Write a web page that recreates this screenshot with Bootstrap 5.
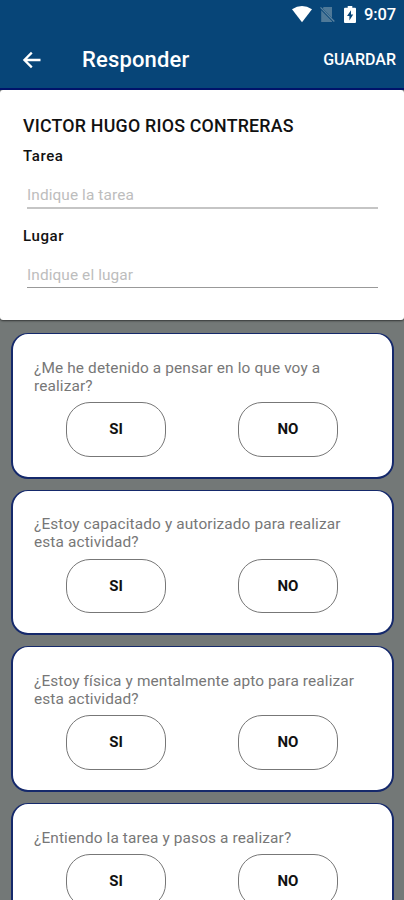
<!DOCTYPE html>
<html lang="es">
<head>
<meta charset="utf-8">
<meta name="viewport" content="width=device-width, initial-scale=1">
<title>Responder</title>
<link href="https://cdn.jsdelivr.net/npm/bootstrap@5.3.0/dist/css/bootstrap.min.css" rel="stylesheet">
<style>
html, body { height: 100%; overflow: hidden; }
body { font-family: Roboto, "Liberation Sans", sans-serif; background: #737877; color: #111; }
.screen { height: 900px; overflow: hidden; }
.top-area { background: #074578; height: 90px; border-bottom: 2px solid #00136b; }
.status-bar { height: 28px; padding-right: 8px; }
.battery { margin-left: 9px; }
.clock { font-size: 16.5px; font-weight: 500; line-height: 30px; padding-top: 2px; letter-spacing: -.1px; }
.app-bar { height: 60px; padding: 3px 8px 0 22px; }
.app-title { font-size: 22px; font-weight: 500; margin-left: 41px; line-height: 1; letter-spacing: .15px; padding-top: 1px; }
.save { font-size: 16px; font-weight: 500; line-height: 1; color: #fff; padding-top: 1px !important; }
.person { height: 230px; border-radius: 3px; padding: 26px 23px 0; box-shadow: 0 1px 2px rgba(0,0,0,.55); }
.person-name { font-size: 17.8px; font-weight: 500; line-height: 20px; letter-spacing: .22px; }
.field-label { font-size: 15px; font-weight: 500; line-height: 18px; letter-spacing: .6px; margin-top: 11px; }
.field-label + .field-input { margin: 12px 3px 0 4px; }
.field-input { width: auto; align-self: stretch; height: 32px; font-size: 15.4px; padding: 6px 0 0 0; letter-spacing: .1px; border-bottom: 2px solid #c5c5c5 !important; color: #222; }
.second-label { margin-top: 18px; }
.field-label + .field-input.thin { height: 31px; padding-top: 6px; border-bottom: 1px solid #999 !important; }
.field-input::placeholder { color: #bdbdbd; opacity: 1; }
.questions { padding-top: 13px; }
.question { margin: 0 10px 10.9px 11px; height: 145.8px; border: 2px solid #15296b; border-top-width: 1px; border-radius: 17px; padding: 24.6px 21px 0; }
.question-text { font-size: 15.4px; line-height: 18.2px; color: #777; letter-spacing: .13px; }
.answers { padding: 0 33px 0 32px; margin-top: 7px; }
.answer { width: 100px; height: 54.5px; border: 1px solid #777; border-radius: 24px; font-size: 15px; font-weight: 700; color: #111; }
</style>
<script src="https://cdn.jsdelivr.net/npm/bootstrap@5.3.0/dist/js/bootstrap.bundle.min.js"></script>
</head>
<body>
<div class="screen">
  <header class="top-area text-white">
    <div class="status-bar d-flex justify-content-end align-items-center">
      <svg width="20" height="17" viewBox="0 0 20 17" fill="#fff"><path d="M0 3.2Q10-3.2 20 3.2L10 16.3Z"/></svg>
      <svg class="ms-2" width="15" height="17" viewBox="0 0 15 17"><path d="M3.8 1H12v11L2.5 2.3ZM1.2 4.2 12 15.3V16H1.2Z" fill="#4f7998"/><path d="M.5 1.3 14.3 15.5" stroke="#5d849f" stroke-width="1.2"/></svg>
      <svg class="battery" width="12" height="17" viewBox="0 0 12 17"><path d="M3.7 0h4.6v1.8H11q1 0 1 1V16q0 1-1 1H1q-1 0-1-1V2.8q0-1 1-1h2.7Z" fill="#fff"/><path d="M7 4.2 3 10h2.4v4.4L9.2 8.5H7Z" fill="#074578"/></svg>
      <span class="clock ms-2">9:07</span>
    </div>
    <nav class="app-bar d-flex align-items-center">
      <svg width="19" height="18" viewBox="0 0 20 19" fill="none" stroke="#fff" stroke-width="2.4"><path d="M19.5 9.5H2.8M10.3 1.7 2.5 9.5l7.8 7.8"/></svg>
      <h1 class="app-title mb-0">Responder</h1>
      <button class="save btn p-0 border-0 ms-auto" type="button">GUARDAR</button>
    </nav>
  </header>
  <section class="person bg-white position-relative d-flex flex-column">
    <h2 class="person-name mb-0">VICTOR HUGO RIOS CONTRERAS</h2>
    <label class="field-label" for="tarea">Tarea</label>
    <input class="field-input form-control border-0 rounded-0" id="tarea" placeholder="Indique la tarea">
    <label class="field-label second-label" for="lugar">Lugar</label>
    <input class="field-input thin form-control border-0 rounded-0" id="lugar" placeholder="Indique el lugar">
  </section>
  <main class="questions">
    <section class="question bg-white">
      <p class="question-text mb-0">¿Me he detenido a pensar en lo que voy a<br>realizar?</p>
      <div class="answers d-flex justify-content-between"><button class="answer btn p-0" type="button">SI</button><button class="answer btn p-0" type="button">NO</button></div>
    </section>
    <section class="question bg-white">
      <p class="question-text mb-0">¿Estoy capacitado y autorizado para realizar<br>esta actividad?</p>
      <div class="answers d-flex justify-content-between"><button class="answer btn p-0" type="button">SI</button><button class="answer btn p-0" type="button">NO</button></div>
    </section>
    <section class="question bg-white">
      <p class="question-text mb-0">¿Estoy física y mentalmente apto para realizar<br>esta actividad?</p>
      <div class="answers d-flex justify-content-between"><button class="answer btn p-0" type="button">SI</button><button class="answer btn p-0" type="button">NO</button></div>
    </section>
    <section class="question bg-white">
      <p class="question-text mb-0">¿Entiendo la tarea y pasos a realizar?</p>
      <div class="answers d-flex justify-content-between"><button class="answer btn p-0" type="button">SI</button><button class="answer btn p-0" type="button">NO</button></div>
    </section>
  </main>
</div>
</body>
</html>
